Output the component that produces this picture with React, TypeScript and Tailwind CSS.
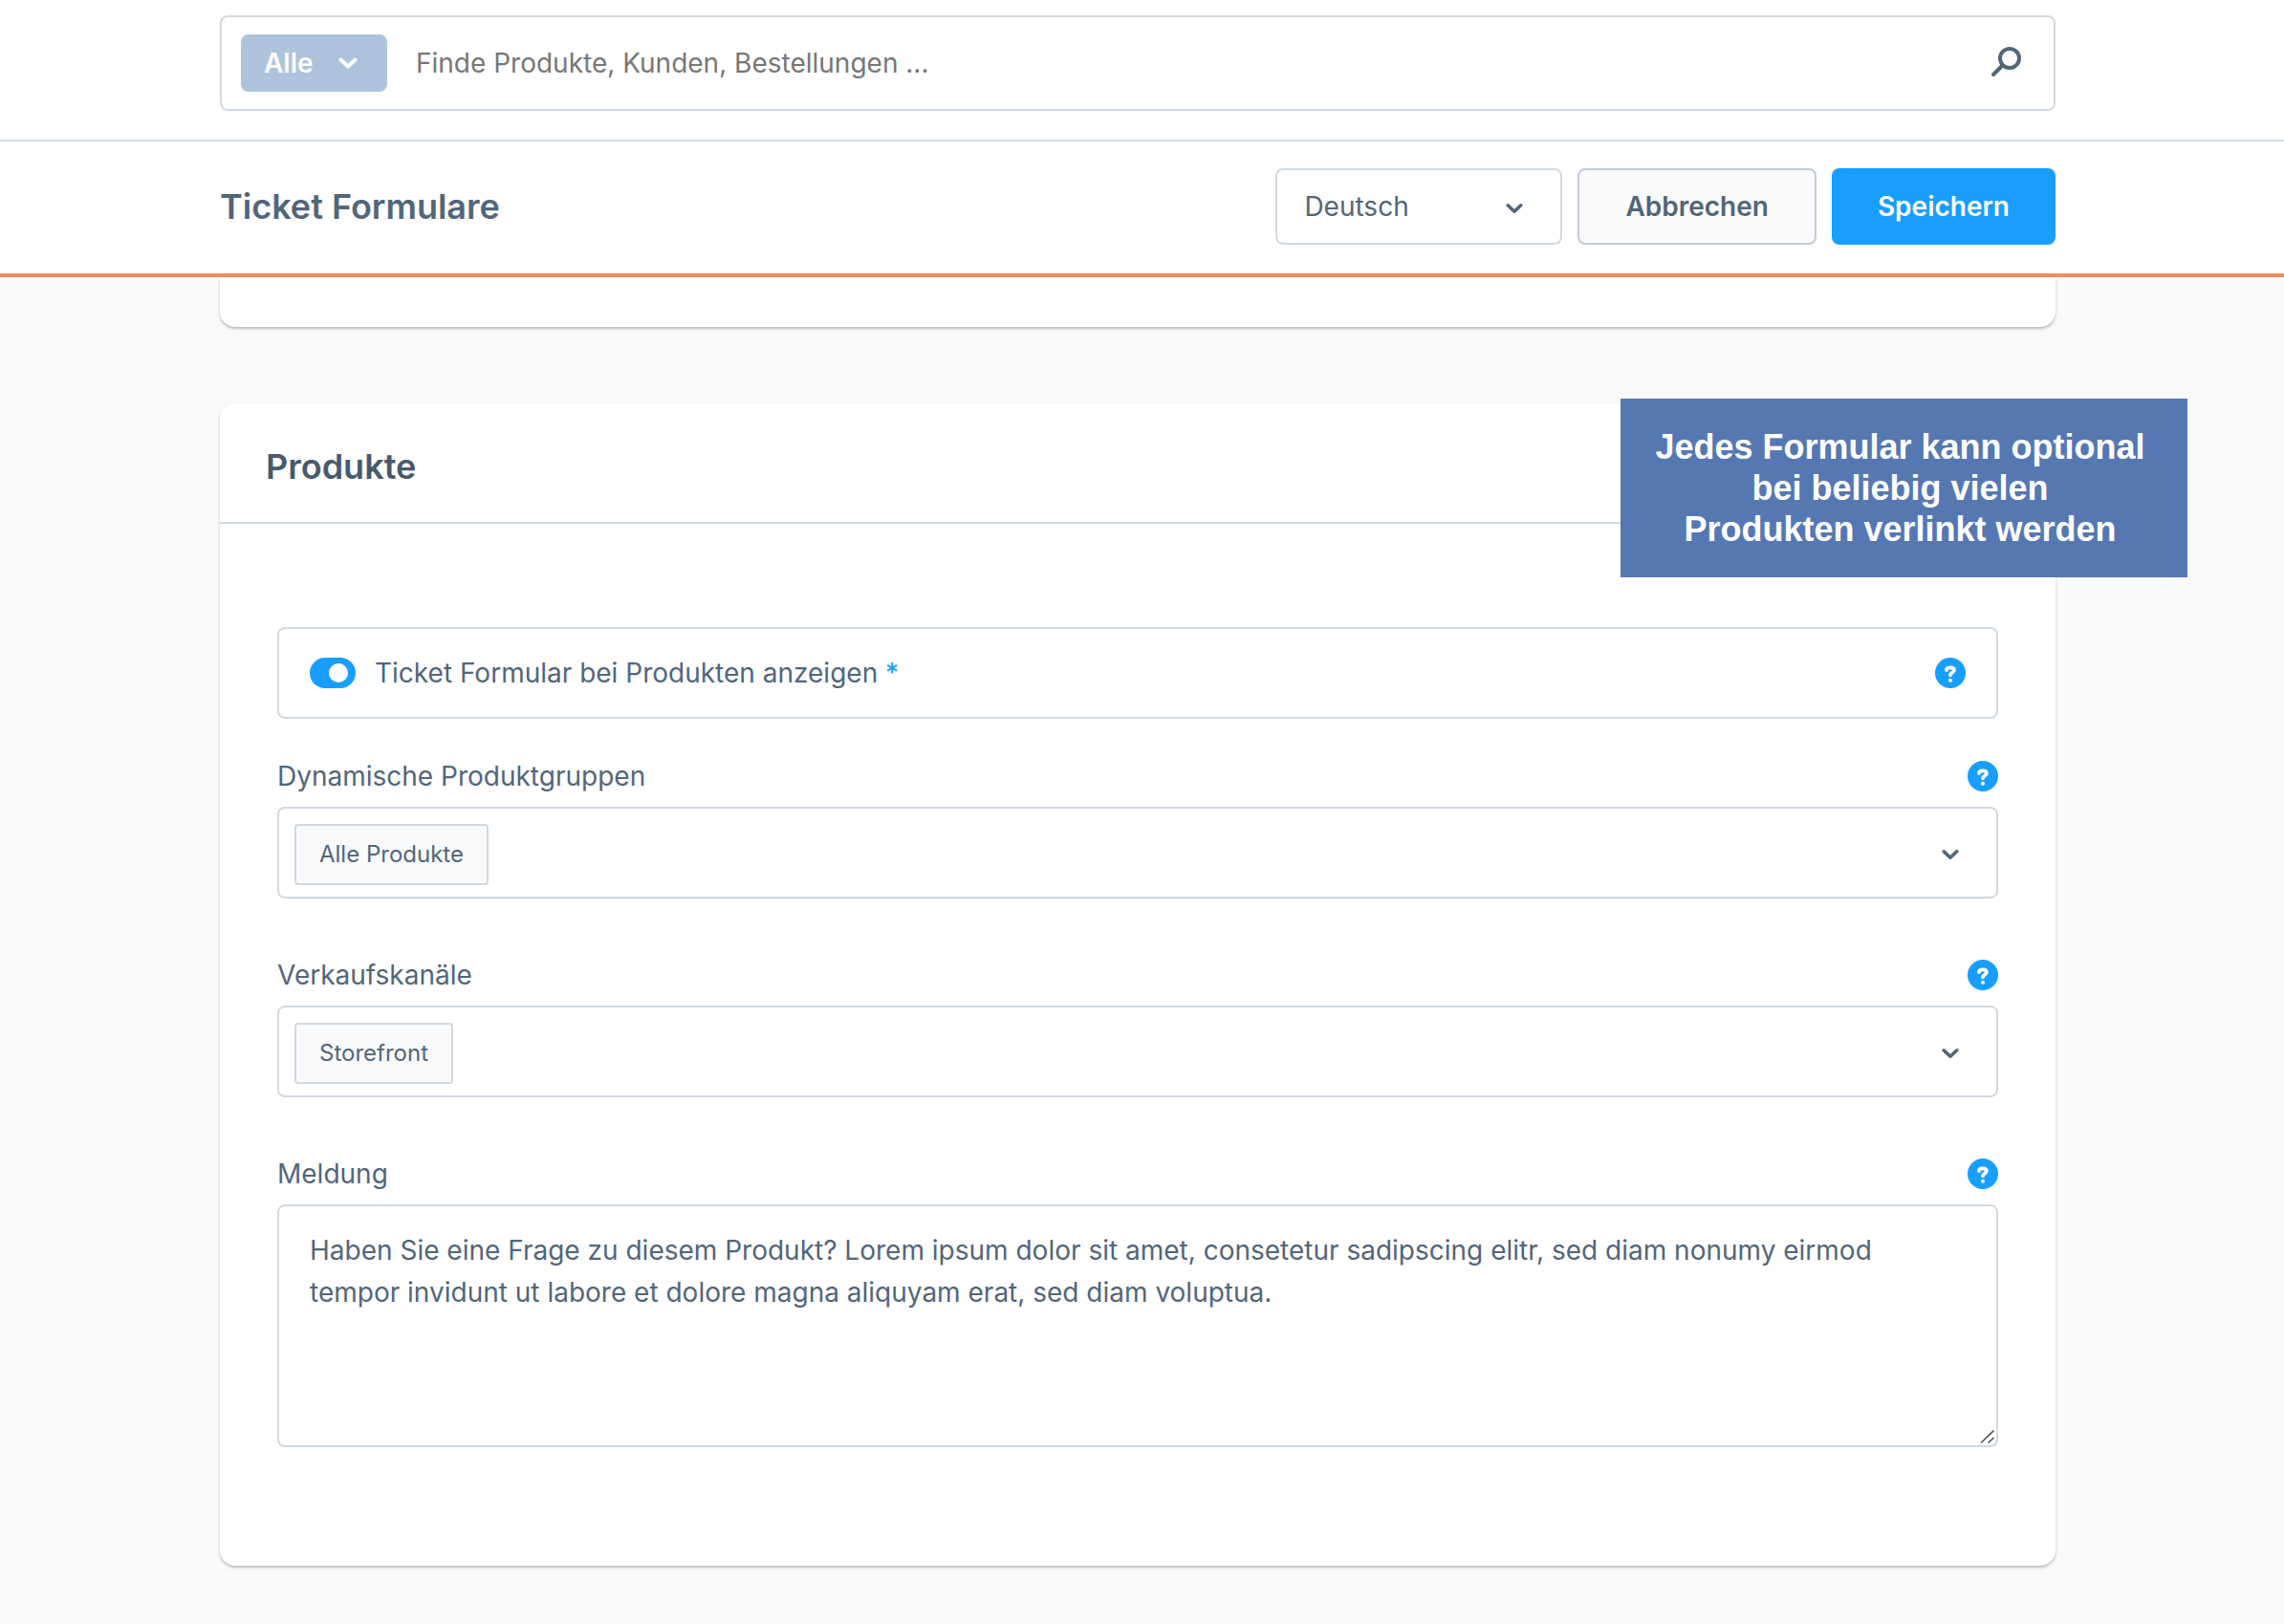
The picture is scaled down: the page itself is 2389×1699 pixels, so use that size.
import { useId, useState } from 'react';
import type { ReactNode } from 'react';

const message =
  'Haben Sie eine Frage zu diesem Produkt? Lorem ipsum dolor sit amet, consetetur sadipscing elitr, sed diam nonumy eirmod tempor invidunt ut labore et dolore magna aliquyam erat, sed diam voluptua.';

const selectFields = [
  { label: 'Dynamische Produktgruppen', tags: ['Alle Produkte'] },
  { label: 'Verkaufskanäle', tags: ['Storefront'] },
];

function ChevronIcon({ className = '' }: { className?: string }) {
  return (
    <svg viewBox="0 0 20 12" fill="none" stroke="currentColor" strokeWidth="3.6" strokeLinecap="round" strokeLinejoin="round" className={className} aria-hidden="true">
      <path d="M3.2 2.8 10 9.2l6.800-6.400" />
    </svg>
  );
}

function SearchIcon() {
  return (
    <svg viewBox="0 0 32 32" fill="none" stroke="currentColor" strokeWidth="4" strokeLinecap="round" className="size-8 overflow-visible" aria-hidden="true">
      <circle cx="20" cy="11" r="10" />
      <path d="M12.500 18.500 3 28" />
    </svg>
  );
}

function HelpButton() {
  return (
    <button type="button" aria-label="Hilfe" className="size-8 shrink-0 text-[#189eff]">
      <svg viewBox="0 0 32 32" className="size-8" aria-hidden="true">
        <circle cx="16" cy="16" r="16" fill="currentColor" />
        <path d="M12 13c0-1.700 1.600-2.700 3.900-2.700s4 1.100 4 3c0 2.400-3.900 2.300-3.900 5" fill="none" stroke="#fff" strokeWidth="3.8" strokeLinecap="round" />
        <circle cx="16" cy="23.800" r="2" fill="#fff" />
      </svg>
    </button>
  );
}

function FieldHeader({ children }: { children: ReactNode }) {
  return (
    <div className="mb-4 flex h-8 items-center justify-between">
      {children}
      <HelpButton />
    </div>
  );
}

function TagSelect({ label, tags }: { label: string; tags: string[] }) {
  const id = useId();
  return (
    <div className="mb-16">
      <FieldHeader>
        <span id={id}>{label}</span>
      </FieldHeader>
      <button
        type="button"
        aria-haspopup="listbox"
        aria-labelledby={id}
        className="flex h-24 w-full items-center justify-between rounded-lg border-2 border-[#d1d9e0] bg-white pt-1 pl-4 pr-[38px]"
      >
        <span className="flex gap-3">
          {tags.map((tag) => (
            <span key={tag} className="flex h-16 items-center rounded-sm border-2 border-[#d1d9e0] bg-[#f9fafb] px-6 text-2xl">
              {tag}
            </span>
          ))}
        </span>
        <ChevronIcon className="h-3 w-5" />
      </button>
    </div>
  );
}

export default function App() {
  const [active, setActive] = useState(true);

  return (
    <div className="min-h-screen bg-[#f9fafb] pb-15 font-['Inter',sans-serif] text-[28px] leading-11 text-[#52667a]">
      <header className="bg-white">
        <div className="border-b-2 border-[#d1d9e0] pr-[9px] pt-4 pb-[30px]">
          <div className="mx-auto flex h-25 max-w-[1920px] items-center rounded-lg border-2 border-[#d1d9e0] pl-5 pr-[34px]">
            <button type="button" className="flex h-15 w-[153px] items-center justify-between rounded-lg bg-[#aec4dc] pl-6 pr-[30px] font-semibold text-white">
              Alle
              <ChevronIcon className="h-3.5 w-[22px]" />
            </button>
            <input
              type="search"
              aria-label="Suche"
              placeholder="Finde Produkte, Kunden, Bestellungen ..."
              className="ml-[30px] min-w-0 flex-1 outline-none placeholder:text-[#777777]"
            />
            <button type="button" aria-label="Suchen">
              <SearchIcon />
            </button>
          </div>
        </div>
        <div className="border-b-4 border-[#f88962] pr-[9px] pt-7 pb-[30px]">
          <div className="mx-auto flex max-w-[1920px] items-center gap-4">
            <h1 className="mr-auto text-4xl font-semibold">Ticket Formulare</h1>
            <div className="relative h-20 w-[300px]">
              <select aria-label="Sprache" className="h-full w-full appearance-none rounded-lg border-2 border-[#d1d9e0] bg-white px-7">
                <option>Deutsch</option>
                <option>English</option>
              </select>
              <ChevronIcon className="pointer-events-none absolute right-10 top-9 h-3 w-5" />
            </div>
            <button type="button" className="h-20 rounded-lg border-2 border-[#c2ccd6] bg-[#f9fafb] px-12 font-semibold">
              Abbrechen
            </button>
            <button type="button" className="h-20 rounded-lg bg-[#189eff] px-12 font-semibold text-white">
              Speichern
            </button>
          </div>
        </div>
      </header>

      <main className="pr-[9px]">
        <div className="mx-auto max-w-[1920px]">
          <div className="h-13 rounded-b-2xl bg-white shadow-[0_2px_2px_rgba(0,0,0,0.14),0_2px_4px_rgba(0,0,0,0.12)]" />

          <section className="relative mt-20 rounded-2xl bg-white shadow-[0_2px_2px_rgba(0,0,0,0.14),0_2px_4px_rgba(0,0,0,0.12)]">
            <h2 className="flex h-[126px] items-center border-b-2 border-[#d1d9e0] px-12 pt-2 text-4xl font-semibold text-[#475a6d]">
              Produkte
            </h2>

            <form className="px-15 pt-[108px] pb-31">
              <div className="mb-11 flex h-24 items-center justify-between rounded-lg border-2 border-[#d1d9e0] px-8">
                <label className="flex items-center gap-5">
                  <input
                    type="checkbox"
                    role="switch"
                    checked={active}
                    onChange={(e) => setActive(e.target.checked)}
                    className="flex h-8 w-12 appearance-none items-center rounded-full bg-[#d1d9e0] px-2 before:size-5 before:rounded-full before:bg-white checked:justify-end checked:bg-[#189eff]"
                  />
                  <span>
                    Ticket Formular bei Produkten anzeigen <span className="text-[#189eff]">*</span>
                  </span>
                </label>
                <HelpButton />
              </div>

              {selectFields.map((field) => (
                <TagSelect key={field.label} label={field.label} tags={field.tags} />
              ))}

              <FieldHeader>
                <label htmlFor="message">Meldung</label>
              </FieldHeader>
              <div className="relative">
                <textarea
                  id="message"
                  defaultValue={message}
                  className="block h-[254px] w-full resize-none rounded-lg border-2 border-[#d1d9e0] px-8 py-6 outline-none"
                />
                <svg viewBox="0 0 16 16" fill="none" stroke="#555" strokeWidth="1.6" className="pointer-events-none absolute right-1 bottom-1 size-4" aria-hidden="true">
                  <path d="M2 15.500 15.500 2.500M9.500 15.500l6-5.500" />
                </svg>
              </div>
            </form>

            <p className="absolute -top-[5px] -right-[138px] w-[593px] bg-[#5578b2] pl-5 pr-7 pt-[29px] pb-[29px] text-center font-['Liberation_Sans',Arial,sans-serif] text-4xl leading-[43px] font-bold text-white">
              Jedes Formular kann optional
              <br />
              bei beliebig vielen
              <br />
              Produkten verlinkt werden
            </p>
          </section>
        </div>
      </main>
    </div>
  );
}
